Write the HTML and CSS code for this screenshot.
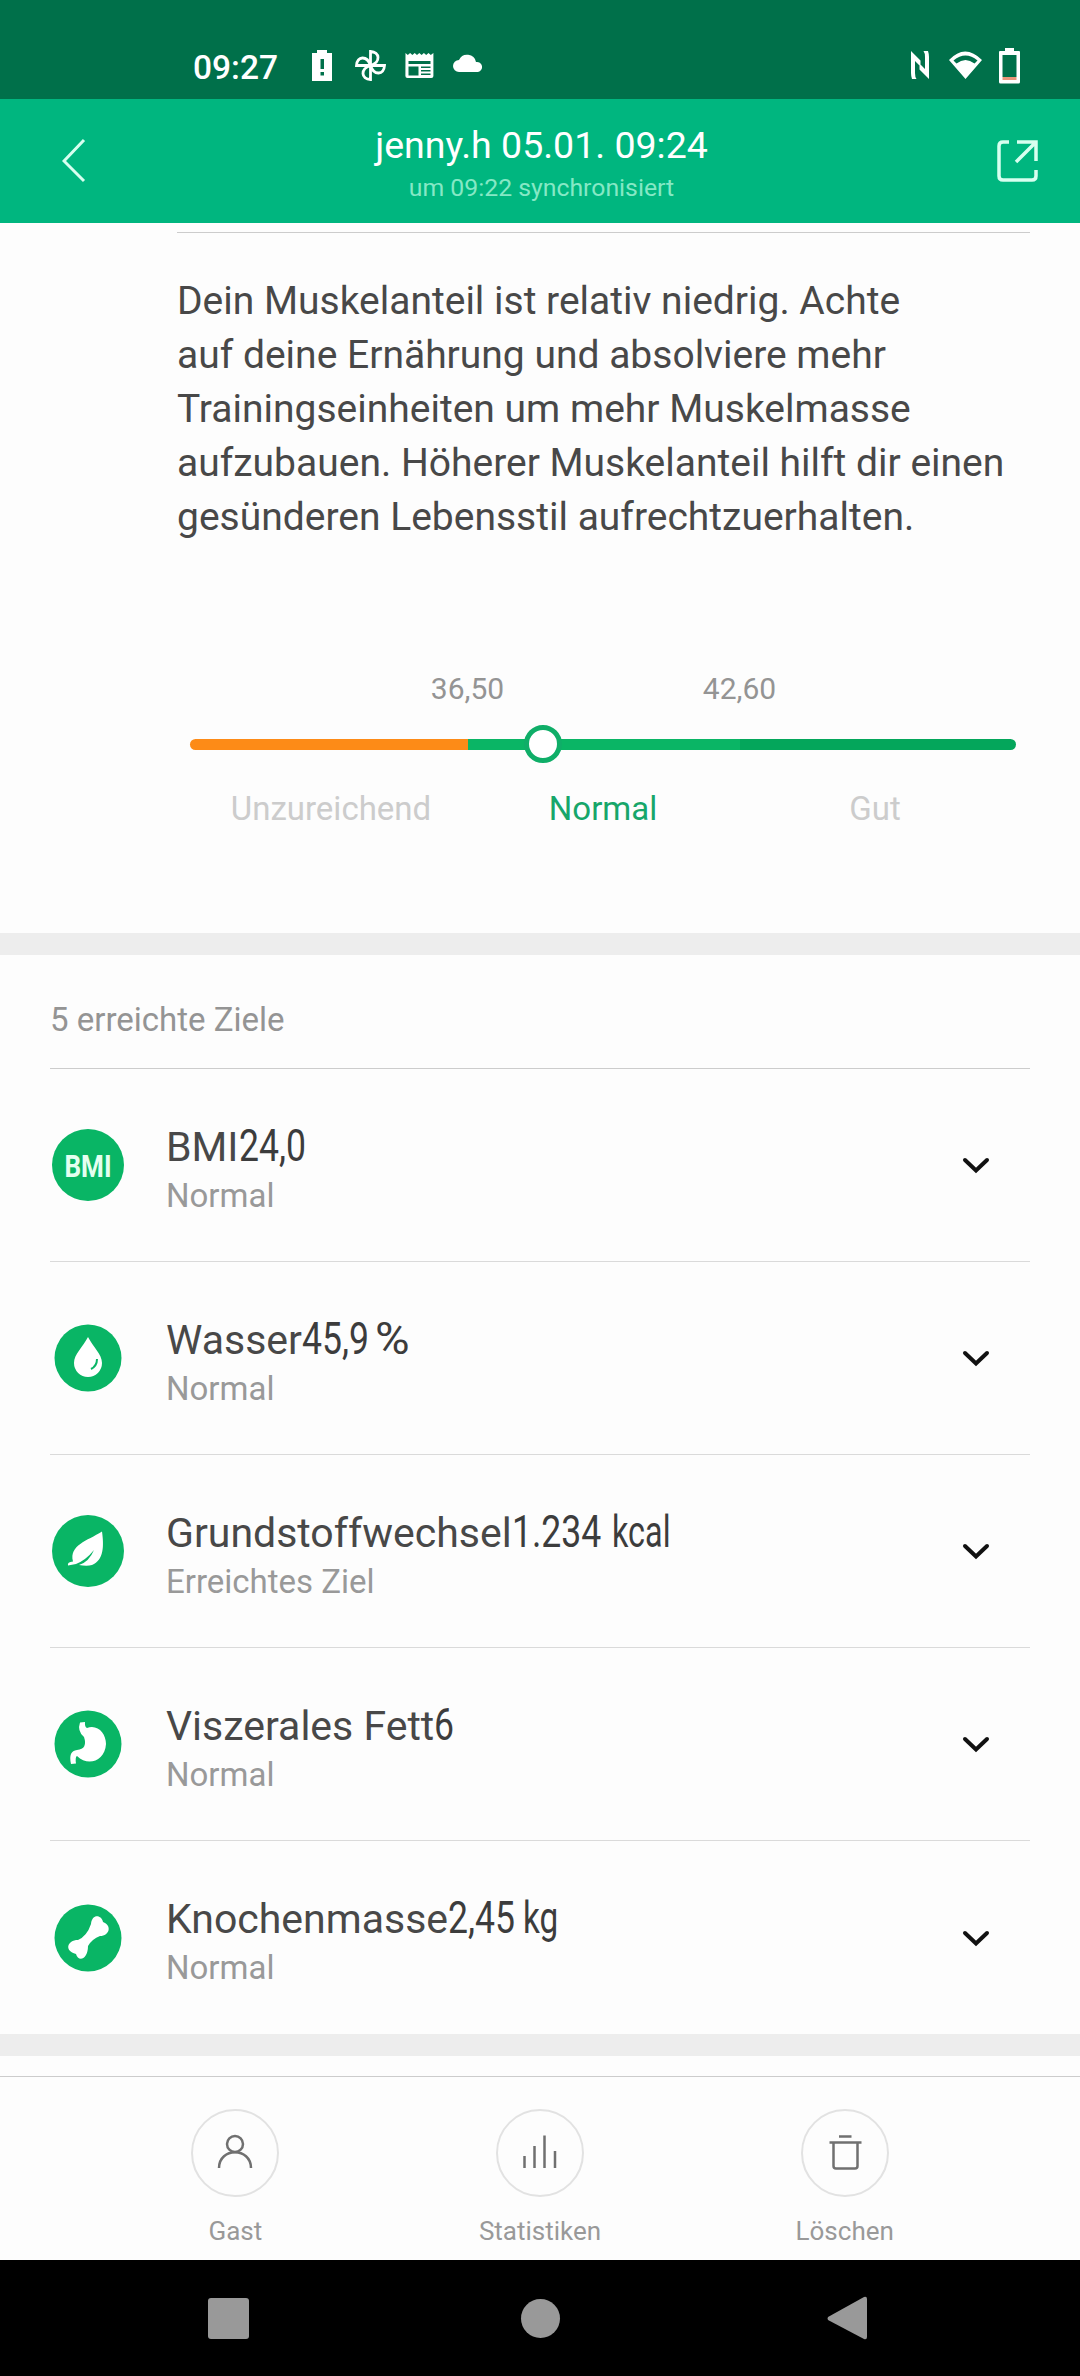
FILE: index.html
```html
<!DOCTYPE html>
<html lang="de">
<head>
    <meta charset="UTF-8">
    <meta name="viewport" content="width=device-width, initial-scale=1.0">
    <title>Messung | jenny.h</title>
    <link rel="stylesheet" href="styles.css">
</head>
<body>
    <div class="statusbar">
        <span class="clock">09:27</span>
        <svg class="status-left" width="172" height="36" viewBox="312 48 172 36" fill="#fff">
            <path fill-rule="evenodd" d="M312 53h5v-3h10v3h5v28h-20zM320.500 59v10h3.500v-10zM320.500 72v3.500h3.500v-3.500z"/>
            <g fill="none" stroke="#fff" stroke-width="2.800">
                <path d="M370.500 65.500V51.500C380 52 381 62 370.500 65.500"/>
                <path d="M370.500 65.500H384.500C384 75 374 76 370.500 65.500"/>
                <path d="M370.500 65.500V79.500C361 79 360 69 370.500 65.500"/>
                <path d="M370.500 65.500H356.500C357 56 367 55 370.500 65.500"/>
            </g>
            <path fill-rule="evenodd" d="M405.500 53l2.300 2 2.300-2 2.300 2 2.300-2 2.300 2 2.300-2 2.300 2 2.300-2 2.300 2 2.300-2 2.300 2 2.600-2v23q0 2-2 2h-24q-2 0-2-2zM408.500 61v3h22v-3zM408.500 66.500v9h10v-9zM421 66.500v1.500h9.500v-1.500zM421 70v1.500h9.500v-1.500zM421 73.500v1.500h9.500v-1.500z"/>
            <path d="M459 72a6 6 0 0 1 0-12 9 9 0 0 1 17 2 5 5 0 0 1 2 10z"/>
        </svg>
        <svg class="status-right" width="110" height="36" viewBox="911 48 110 36" fill="#fff">
            <path d="M911 51l9.500 9.500v6l-5.500-5.500v12q0 4 1.500 6h-4.500q-1-3-1-6zM929 79l-9.500-9.500v-6l5.500 5.500v-12q0-4-1.500-6h4.500q1 3 1 6z"/>
            <path fill-rule="evenodd" d="M965.500 79L949 60q16-17 33 0zM953.500 60.500l3 3q9-7 18 0l3-3q-12-10-24 0z"/>
            <path fill-rule="evenodd" d="M999 52q0-1 1-1h5v-3h9v3h5q1 0 1 1v30q0 1.500-1.500 1.500h-18q-1.500 0-1.500-1.500zM1002.500 55v22h14v-22z"/>
            <path fill="#e9967a" d="M1002.500 77h14v3h-14z"/>
        </svg>
    </div>
    <header>
        <svg class="back" width="24" height="46" viewBox="0 0 24 46"><path d="M22 2L2 23l20 20"/></svg>
        <div class="heading">
            <h1>jenny.h 05.01. 09:24</h1>
            <p>um 09:22 synchronisiert</p>
        </div>
        <svg class="share" width="42" height="42" viewBox="0 0 42 42"><path d="M12 2H6Q2 2 2 6v30q0 4 4 4h29q4 0 4-4v-6M20 2h19v19M39 2L19 22"/></svg>
    </header>

    <section class="muscle">
        <p>Dein Muskelanteil ist relativ niedrig. Achte<br>auf deine Ernährung und absolviere mehr<br>Trainingseinheiten um mehr Muskelmasse<br>aufzubauen. Höherer Muskelanteil hilft dir einen<br>gesünderen Lebensstil aufrechtzuerhalten.</p>
        <div class="limits">
            <span>36,50</span>
            <span>42,60</span>
        </div>
        <div class="scale">
            <div class="low"></div>
            <div class="normal"></div>
            <div class="good"></div>
            <div class="thumb"></div>
        </div>
        <div class="labels">
            <span>Unzureichend</span>
            <span class="active">Normal</span>
            <span>Gut</span>
        </div>
    </section>

    <section class="goals">
        <h2>5 erreichte Ziele</h2>
        <div class="goal">
            <svg class="icon" width="76" height="76" viewBox="0 0 76 76">
                <circle cx="38" cy="38" r="36"/>
                <text x="38" y="49.500" textLength="47" lengthAdjust="spacingAndGlyphs">BMI</text>
            </svg>
            <div class="info">
                <h3>BMI<span class="value">24,0</span></h3>
                <p>Normal</p>
            </div>
            <svg class="arrow" width="28" height="18" viewBox="0 0 28 18"><path d="M3 3l11 10.500L25 3"/></svg>
        </div>
        <div class="goal">
            <svg class="icon" width="76" height="76" viewBox="0 0 76 76">
                <circle cx="38" cy="38" r="33.500"/>
                <path class="shape" d="M38 17C33 27 24 34 24 43a14 14 0 0 0 28 0C52 34 43 27 38 17z"/>
                <path class="line" d="M47 39Q47 46 41 49"/>
            </svg>
            <div class="info">
                <h3>Wasser<span class="value">45,9</span><span class="unit percent">%</span></h3>
                <p>Normal</p>
            </div>
            <svg class="arrow" width="28" height="18" viewBox="0 0 28 18"><path d="M3 3l11 10.500L25 3"/></svg>
        </div>
        <div class="goal">
            <svg class="icon" width="76" height="76" viewBox="0 0 76 76">
                <circle cx="38" cy="38" r="36"/>
                <path class="shape" d="M52 18.500C54 33 54 47 42 52Q37 53.500 29 52Q39 49 44 37Q36 47 26 51L18 52.500Q17 49 23 48.500C19 32 37 28 52 18.500z"/>
            </svg>
            <div class="info">
                <h3>Grundstoffwechsel<span class="value">1.234</span><span class="unit kcal">kcal</span></h3>
                <p>Erreichtes Ziel</p>
            </div>
            <svg class="arrow" width="28" height="18" viewBox="0 0 28 18"><path d="M3 3l11 10.500L25 3"/></svg>
        </div>
        <div class="goal">
            <svg class="icon" width="76" height="76" viewBox="0 0 76 76">
                <circle cx="38" cy="38" r="33.500"/>
                <path class="shape" d="M30 16.500L35 16Q34.500 21 37 22C48 18 56 28 56 38C55 55 38 61 27 50Q25 51 26 57.500L21 58Q18 45 27 44Q38 43 34 31Q27 25 30 16.500z"/>
            </svg>
            <div class="info">
                <h3>Viszerales Fett<span class="value">6</span></h3>
                <p>Normal</p>
            </div>
            <svg class="arrow" width="28" height="18" viewBox="0 0 28 18"><path d="M3 3l11 10.500L25 3"/></svg>
        </div>
        <div class="goal">
            <svg class="icon" width="76" height="76" viewBox="0 0 76 76">
                <circle cx="38" cy="38" r="33.500"/>
                <path class="shape" d="M41 24C42 13 52 15 53 22C62 25 60 36 50 36Q42 39 38 46C38 60 28 62 26 54C14 51 17 40 28 40Q37 36 41 24z"/>
            </svg>
            <div class="info">
                <h3>Knochenmasse<span class="value">2,45</span><span class="unit kg">kg</span></h3>
                <p>Normal</p>
            </div>
            <svg class="arrow" width="28" height="18" viewBox="0 0 28 18"><path d="M3 3l11 10.500L25 3"/></svg>
        </div>
    </section>

    <footer>
        <a>
            <svg width="88" height="88" viewBox="0 0 88 88"><circle class="ring" cx="44" cy="44" r="43"/><circle cx="44" cy="35" r="8"/><path d="M28 59C28 38 60 38 60 59"/></svg>
            <span>Gast</span>
        </a>
        <a>
            <svg width="88" height="88" viewBox="0 0 88 88"><circle class="ring" cx="44" cy="44" r="43"/><path d="M28.500 47v12M38.500 37v22M48.500 26.500V59M59 42v17"/></svg>
            <span>Statistiken</span>
        </a>
        <a>
            <svg width="88" height="88" viewBox="0 0 88 88"><circle class="ring" cx="44" cy="44" r="43"/><path d="M38 27.500h12.500M28.500 33.500h32M32.500 33.500V57q0 2.500 2.500 2.500h19q2.500 0 2.500-2.500V33.500"/></svg>
            <span>Löschen</span>
        </a>
    </footer>
    <nav>
        <svg width="42" height="46" viewBox="0 0 42 46"><rect x="0" y="2" width="41" height="41" rx="3"/></svg>
        <svg width="44" height="46" viewBox="0 0 44 46"><circle cx="23.500" cy="22.500" r="19.500"/></svg>
        <svg width="42" height="46" viewBox="0 0 42 46"><path d="M1 21L37 1q3-1 3 2v38q0 3-3 2L1 24q-1-1.500 0-3z"/></svg>
    </nav>
</body>
</html>
```
FILE: styles.css
```css
* {
    box-sizing: border-box;
}
body {
    font-family: Roboto, sans-serif;
    margin: 0;
    background-color: #fdfdfd;
    color: #484848;
    width: 1080px;
    height: 2376px;
    overflow: hidden;
    display: flex;
    flex-direction: column;
}
h1, h2, h3, p {
    margin: 0;
    font-weight: 400;
}
.statusbar {
    height: 99px;
    flex: none;
    background-color: #00704a;
    display: flex;
    align-items: flex-start;
    padding: 48px 59px 0 193px;
}
.clock {
    width: 119px;
    padding-top: 1px;
    font-size: 33.5px;
    font-weight: 500;
    line-height: 38px;
    color: #fff;
}
.status-right {
    margin-left: auto;
}
header {
    height: 124px;
    flex: none;
    background-color: #00b67f;
    display: flex;
    align-items: center;
    justify-content: space-between;
    padding: 0 41px 0 62px;
    color: #fff;
}
header svg {
    fill: none;
    stroke: #d8fff0;
    stroke-width: 3;
}
header .share {
    stroke-width: 3.5;
}
.heading {
    text-align: center;
    padding-top: 8px;
}
.heading h1 {
    font-size: 37.5px;
    line-height: 45px;
}
.heading p {
    font-size: 24.8px;
    line-height: 39px;
    color: #85e8c5;
}
.muscle {
    height: 731px;
    flex: none;
    margin-top: 9px;
    padding: 41px 0 0;
    margin-left: 177px;
    margin-right: 50px;
    border-top: 1px solid #ccc;
}
.muscle p {
    font-size: 39px;
    line-height: 54px;
    white-space: nowrap;
}
.limits {
    display: flex;
    justify-content: center;
    margin: 127px 0 0;
    font-size: 30px;
    line-height: 36px;
    color: #949494;
}
.limits span {
    width: 272px;
    text-align: center;
}
.scale {
    position: relative;
    display: flex;
    height: 11px;
    margin: 32px 14px 0 13px;
}
.low {
    width: 278px;
    background-color: #fd8b17;
    border-radius: 6px 0 0 6px;
}
.normal {
    width: 272px;
    background-color: #0ab565;
}
.good {
    flex: 1;
    background-color: #04a65b;
    border-radius: 0 6px 6px 0;
}
.thumb {
    position: absolute;
    left: 334px;
    top: -14px;
    width: 38px;
    height: 38px;
    border: 5px solid #0fae68;
    border-radius: 50%;
    background-color: #fff;
}
.labels {
    display: flex;
    margin: 39px 0 0 18px;
    font-size: 33px;
    line-height: 40px;
    color: #ccc;
}
.labels span {
    width: 272px;
    text-align: center;
}
.labels .active {
    color: #17a66a;
}
.goals {
    flex: none;
    height: 1123px;
    margin-top: -30px;
    border-top: 22px solid #ededed;
    border-bottom: 22px solid #ededed;
    padding: 0 50px;
}
.goals h2 {
    height: 114px;
    padding-top: 45px;
    font-size: 33px;
    line-height: 40px;
    color: #949494;
    border-bottom: 1px solid #ccc;
}
.goal {
    display: flex;
    align-items: center;
    height: 193px;
    border-bottom: 1px solid #dadada;
}
.goal:last-child {
    border-bottom: none;
}
.icon {
    fill: #09b565;
}
.icon text {
    fill: #e4fff0;
    font-size: 32px;
    font-weight: 700;
    text-anchor: middle;
}
.icon .shape {
    fill: #fff;
}
.icon .line {
    fill: none;
    stroke: #09b565;
    stroke-width: 2;
}
.info {
    flex: 1;
    padding: 5px 0 0 40px;
}
.info h3 {
    font-size: 41px;
    line-height: 54px;
    white-space: nowrap;
}
.info p {
    font-size: 33px;
    line-height: 43px;
    color: #999;
}
/* narrow digits behind the name */
.value, .unit {
    display: inline-block;
    font-size: 45px;
    line-height: 54px;
    color: #3c3c3c;
    transform: scaleX(.79);
    transform-origin: left;
}
.percent {
    margin-left: -12px;
    transform: scaleX(1.05);
}
.kcal {
    margin-left: -13px;
    transform: scaleX(.72);
}
.kg {
    margin-left: -10px;
    transform: scaleX(.74);
}
.arrow {
    margin: 2px 40px 0 0;
    fill: none;
    stroke: #111;
    stroke-width: 4;
    stroke-linecap: round;
}
footer {
    display: flex;
    flex: none;
    height: 184px;
    margin-top: 20px;
    border-top: 1px solid #ccc;
    padding: 32px 83px 0 83px;
}
footer a {
    flex: 1;
    display: flex;
    flex-direction: column;
    align-items: center;
    font-size: 26px;
    line-height: 32px;
    color: #999;
}
footer svg {
    fill: none;
    stroke: #707070;
    stroke-width: 2.5;
    margin-bottom: 18px;
}
footer .ring {
    stroke: #e2e2e2;
    stroke-width: 2;
}
nav {
    flex: 1;
    background-color: #000;
    display: flex;
    justify-content: space-between;
    padding: 36px 211px 0 208px;
    fill: #999;
}
```
